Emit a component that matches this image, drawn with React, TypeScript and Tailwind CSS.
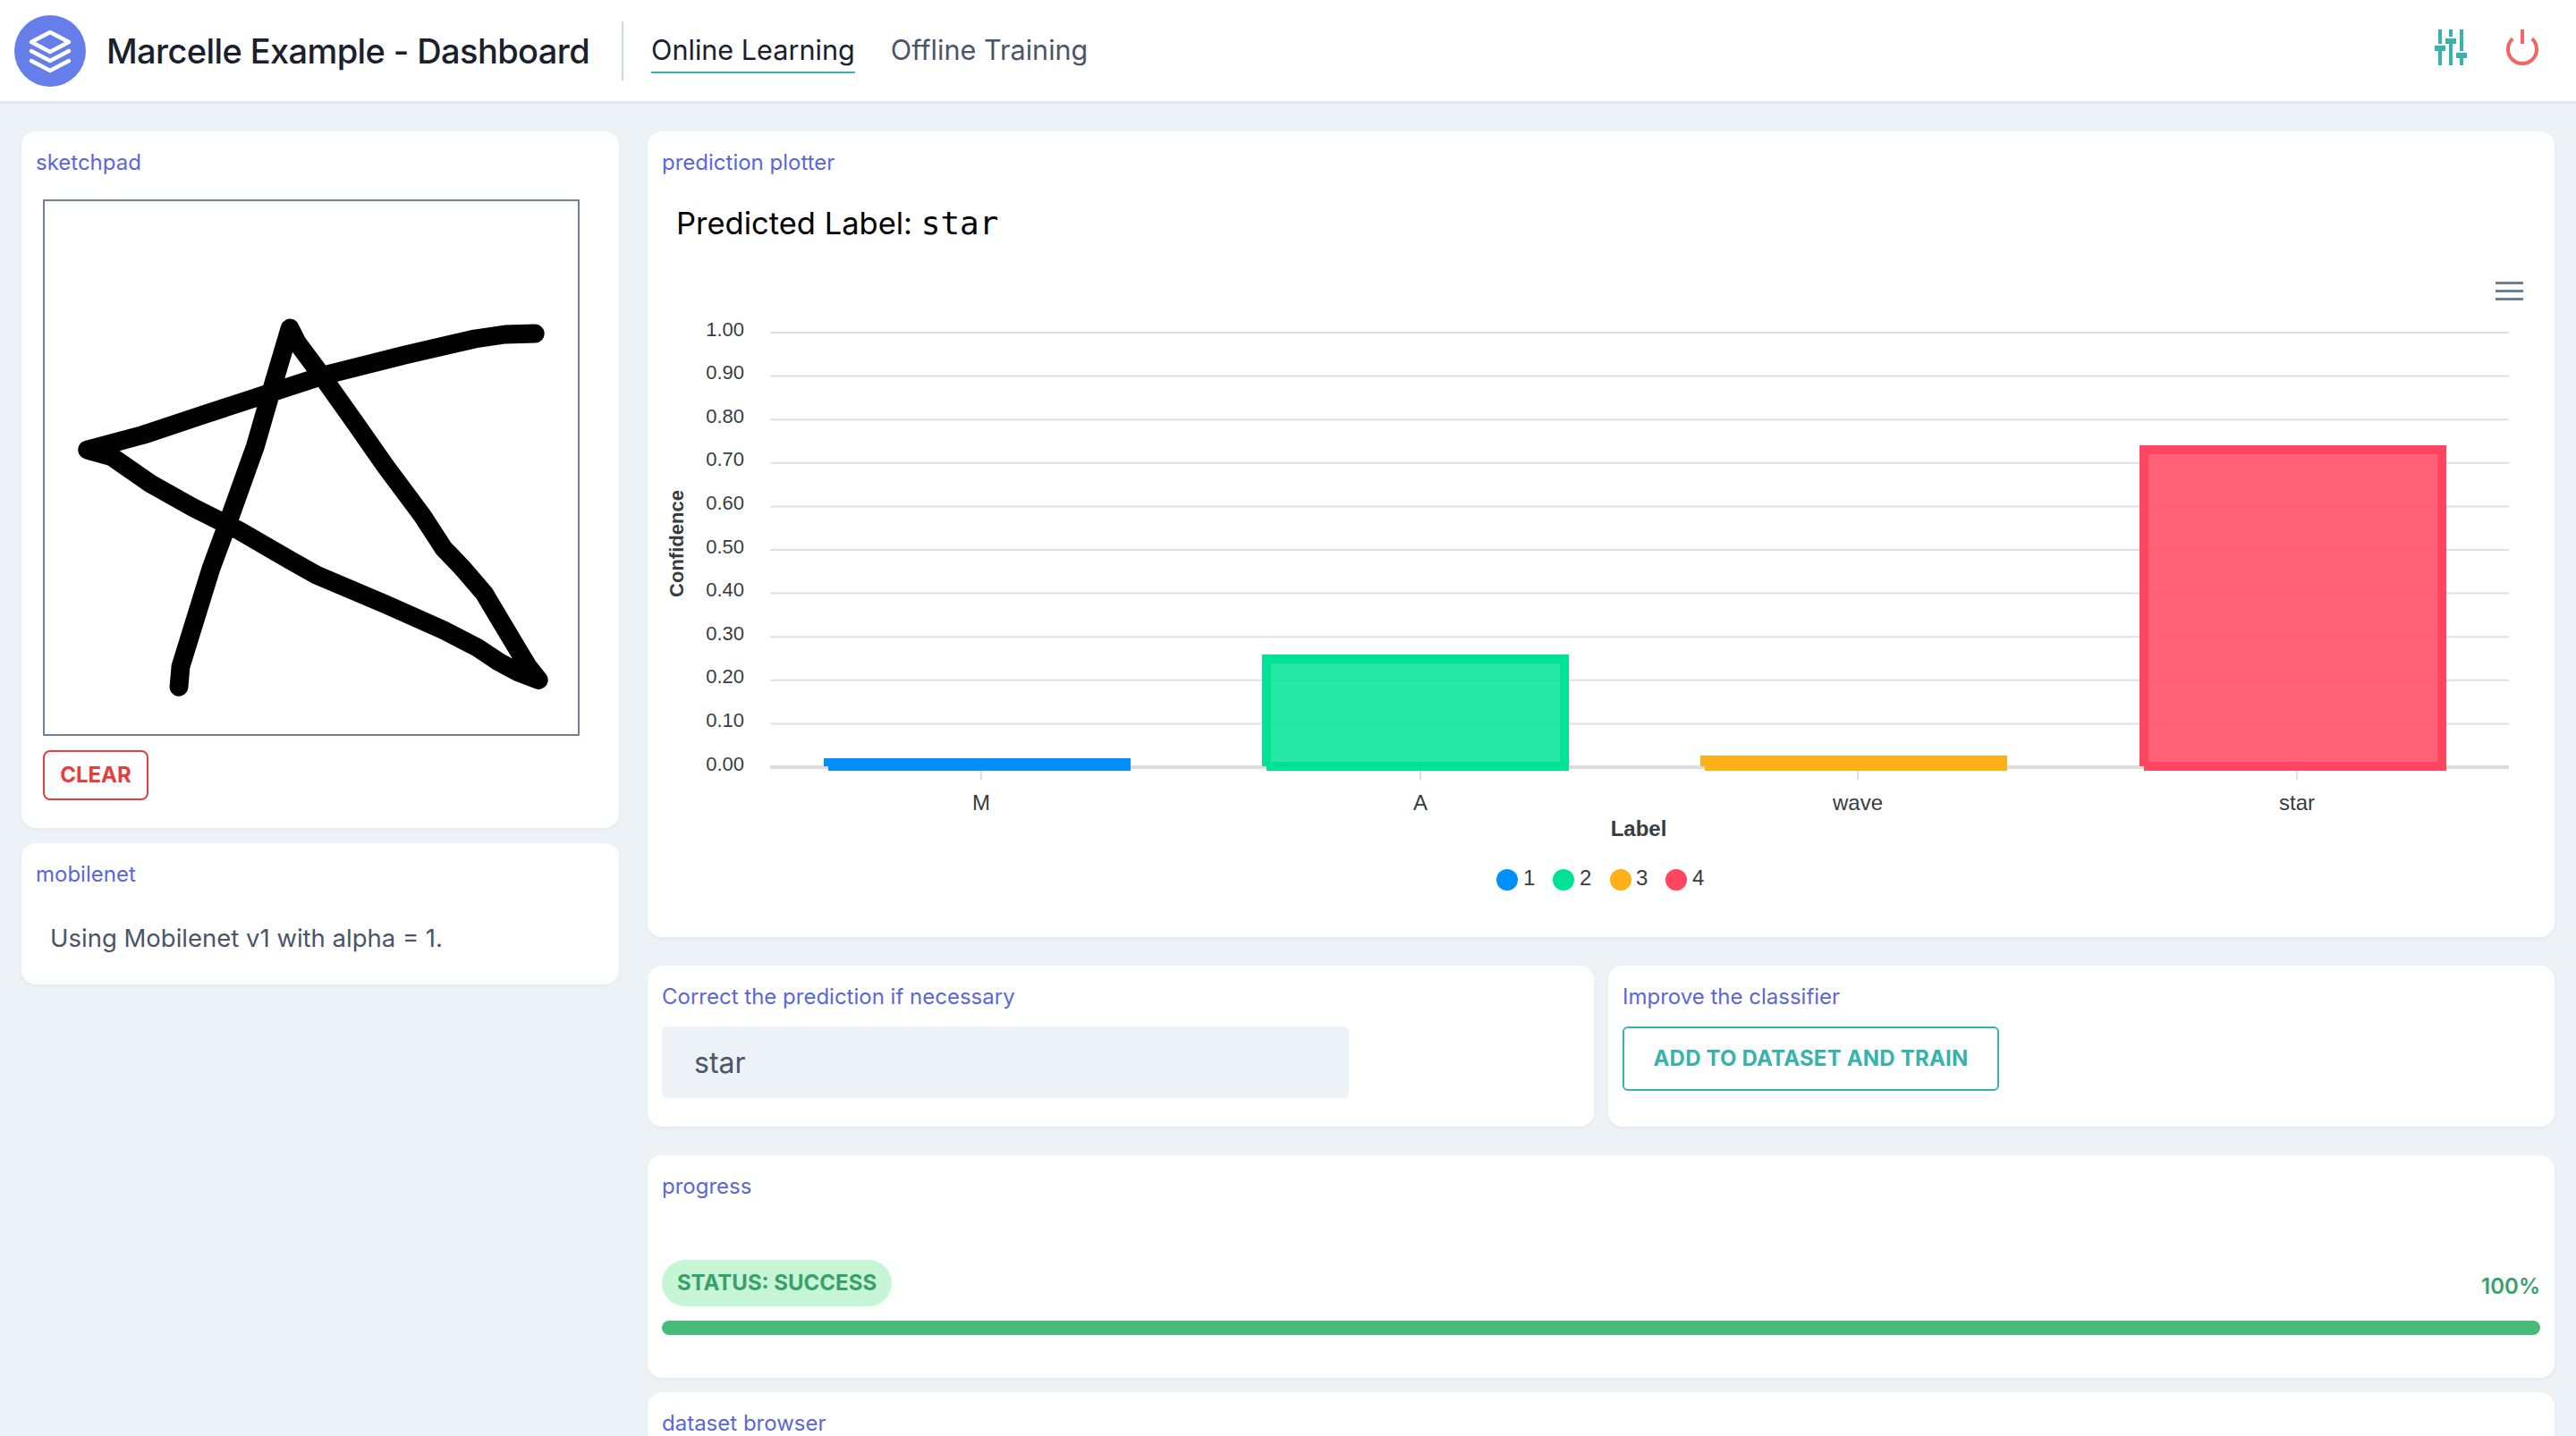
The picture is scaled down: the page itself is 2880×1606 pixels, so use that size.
const sansFont = "font-['Inter','Noto_Sans',sans-serif]";

const yTicks = ["1.00", "0.90", "0.80", "0.70", "0.60", "0.50", "0.40", "0.30", "0.20", "0.10", "0.00"];

const xTicks = [
  { label: "M", x: 1097 },
  { label: "A", x: 1588 },
  { label: "wave", x: 2077 },
  { label: "star", x: 2568 },
];

const bars = [
  { left: 921, right: 1264, top: 848, color: "#008ffb" },
  { left: 1411, right: 1754, top: 732, color: "#00e396" },
  { left: 1901, right: 2244, top: 845, color: "#feb019" },
  { left: 2392, right: 2735, top: 498, color: "#ff4560" },
];

const legend = [
  { label: "1", cx: 1685, tx: 1703, color: "#008ffb" },
  { label: "2", cx: 1748, tx: 1766, color: "#00e396" },
  { label: "3", cx: 1812, tx: 1829, color: "#feb019" },
  { label: "4", cx: 1874, tx: 1892, color: "#ff4560" },
];

const strokePoints =
  "151,547 153,524 187,414 208,357 237,276 254,217 276,143 284,159 310,194 349,249 384,299 425,354 449,391 471,414 495,442 514,474 544,524 556,539 532,530 510,518 486,502 449,483 384,454 306,421 276,404 219,371 167,345 119,318 76,288 48,280 111,263 180,240 250,217 315,196 406,173 484,155 518,150 552,149";

function Card({ title, className, children }: { title: string; className?: string; children?: React.ReactNode }) {
  return (
    <section className={`rounded-[16px] bg-white px-[16px] pt-[21px] shadow-[0_2px_4px_rgba(0,0,0,0.04)] ${className ?? ""}`}>
      <h2 className="text-[24px] leading-[28px] text-[#5a67d8]">{title}</h2>
      {children}
    </section>
  );
}

function Logo() {
  return (
    <div className="h-[80px] w-[80px] shrink-0 rounded-full bg-[#667eea]">
      <svg width="80" height="80" viewBox="0 0 80 80" fill="none" stroke="white" strokeWidth="4.5" strokeLinecap="round" strokeLinejoin="round">
        <path d="M40 19 61 30 40 41 19 30Z" />
        <path d="M19 40 40 51 61 40" />
        <path d="M19 51 40 62 61 51" />
      </svg>
    </div>
  );
}

function SlidersIcon() {
  return (
    <svg width="36" height="40" viewBox="0 0 36 40" fill="#38b2ac">
      <path d="M4 0h4v16H4zM0 18h12v6H0zM4 24h4v16H4z" />
      <path d="M16 0h4v8h-4zM12 10h12v6H12zM16 16h4v24h-4z" />
      <path d="M28 0h4v24h-4zM24 26h12v6H24zM28 32h4v8h-4z" />
    </svg>
  );
}

function PowerIcon() {
  return (
    <svg width="36" height="40" viewBox="0 0 36 40" fill="none" stroke="#f56565" strokeWidth="4">
      <path d="M18 0v16" />
      <path d="M7.2 10.3A16 16 0 1 0 28.8 10.3" />
    </svg>
  );
}

function Header() {
  return (
    <header className="flex h-[116px] items-center border-b-[3px] border-[#e2e8f0] bg-white pl-[16px] pr-[42px]">
      <Logo />
      <h1 className="ml-[23px] w-[576px] text-[38px] font-medium leading-none tracking-[-0.6px] text-[#1a202c]">Marcelle Example - Dashboard</h1>
      <div className="h-[66px] w-[2px] bg-[#cbd5e0]" />
      <nav className="ml-[31px] flex gap-[40px] text-[30.6px] leading-[48px]">
        <a className="border-b-[2px] border-[#38b2ac] text-[#1a202c]">Online Learning</a>
        <a className="text-[#4a5568]">Offline Training</a>
      </nav>
      <div className="mb-[7px] ml-auto flex items-center gap-[44px]">
        <SlidersIcon />
        <PowerIcon />
      </div>
    </header>
  );
}

function Sketchpad() {
  return (
    <Card title="sketchpad" className="h-[779px]">
      <div className="ml-[8px] mt-[27px] h-[600px] w-[600px] border-2 border-[#718096]">
        <svg className="block h-full w-full" viewBox="0 0 600 600" fill="none">
          <polyline points={strokePoints} stroke="black" strokeWidth="21" strokeLinecap="round" strokeLinejoin="round" />
        </svg>
      </div>
      <button className="ml-[8px] mt-[16px] h-[56px] w-[118px] rounded-[8px] border-2 border-[#e53e3e] text-[24px] font-bold text-[#e53e3e]">
        CLEAR
      </button>
    </Card>
  );
}

function PredictionChart() {
  return (
    <svg className="block" width="2132" height="781" viewBox="724 267 2132 781" fontFamily="'Liberation Sans', Arial, sans-serif">
      <g fill="#6e8192">
        <rect x="2790" y="315" width="31" height="3" />
        <rect x="2790" y="324" width="31" height="3" />
        <rect x="2790" y="333" width="31" height="3" />
      </g>
      {yTicks.map((tick, i) => {
        const y = 372 + i * 48.6;
        return (
          <g key={tick}>
            <line x1="861" x2="2805" y1={y} y2={y} stroke={i === 10 ? "#dcdcdc" : "#e0e0e0"} strokeWidth={i === 10 ? 4 : 2} />
            <text x="832" y={y + 3.5} textAnchor="end" fontSize="22" fill="#373d3f">
              {tick}
            </text>
          </g>
        );
      })}
      {bars.map((bar) => (
        <path
          key={bar.color}
          d={`M${bar.left + 5} 857V${bar.top + 5}H${bar.right - 5}V857H${bar.left + 5}`}
          fill={bar.color}
          fillOpacity="0.85"
          stroke={bar.color}
          strokeWidth="10"
          strokeLinejoin="miter"
        />
      ))}
      {xTicks.map((tick) => (
        <g key={tick.label}>
          <line x1={tick.x} x2={tick.x} y1="862" y2="872" stroke="#e0e0e0" strokeWidth="2" />
          <text x={tick.x} y="906" textAnchor="middle" fontSize="24" fill="#373d3f">
            {tick.label}
          </text>
        </g>
      ))}
      <text x="1832" y="935" textAnchor="middle" fontSize="24" fontWeight="700" fill="#373d3f">
        Label
      </text>
      <text transform="translate(764 608) rotate(-90)" textAnchor="middle" fontSize="22" fontWeight="700" fill="#373d3f">
        Confidence
      </text>
      {legend.map((item) => (
        <g key={item.label}>
          <circle cx={item.cx} cy="984" r="12" fill={item.color} />
          <text x={item.tx} y="990" fontSize="24" fill="#373d3f">
            {item.label}
          </text>
        </g>
      ))}
    </svg>
  );
}

export default function App() {
  return (
    <div className={`h-[1606px] overflow-hidden bg-[#edf2f7] ${sansFont}`}>
      <Header />
      <main className="flex gap-[32px] pl-[24px] pr-[24px] pt-[31px]">
        <div className="flex w-[668px] shrink-0 flex-col gap-[17px]">
          <Sketchpad />
          <Card title="mobilenet" className="h-[158px]">
            <p className="ml-[16px] mt-[36px] text-[27.5px] leading-[42px] text-[#4a5568]">Using Mobilenet v1 with alpha = 1.</p>
          </Card>
        </div>
        <div className="flex min-w-0 flex-1 flex-col">
          <section className="relative h-[901px] rounded-[16px] bg-white shadow-[0_2px_4px_rgba(0,0,0,0.04)]">
            <h2 className="px-[16px] pt-[21px] text-[24px] leading-[28px] text-[#5a67d8]">prediction plotter</h2>
            <p className="ml-[32px] mt-[30px] text-[34.5px] leading-[48px] text-black">
              Predicted Label: <span className="font-['DejaVu_Sans_Mono',monospace] text-[36px]">star</span>
            </p>
            <div className="absolute left-0 top-[120px]">
              <PredictionChart />
            </div>
          </section>
          <div className="mt-[32px] flex gap-[16px]">
            <Card title="Correct the prediction if necessary" className="h-[180px] w-[1058px]">
              <div className="mt-[19px] flex h-[80px] w-[768px] items-center rounded-[6px] bg-[#edf2f7] px-[36px] pt-[1px] text-[32px] text-[#4a5568]">star</div>
            </Card>
            <Card title="Improve the classifier" className="h-[180px] flex-1">
              <button className="mt-[19px] h-[72px] w-[421px] rounded-[6px] border-2 border-[#38b2ac] text-[24px] font-bold tracking-[0.2px] text-[#38b2ac]">
                ADD TO DATASET AND TRAIN
              </button>
            </Card>
          </div>
          <Card title="progress" className="mt-[32px] h-[249px]">
            <div className="mt-[68px] flex items-end justify-between">
              <span className="flex h-[52px] w-[257px] items-center justify-center rounded-full bg-[#c6f6d5] text-[24px] font-bold text-[#38a169]">
                STATUS: SUCCESS
              </span>
              <span className="mb-[4px] text-[24px] font-semibold leading-[36px] text-[#38a169]">100%</span>
            </div>
            <div className="mt-[16px] h-[16px] rounded-full bg-[#48bb78]" />
          </Card>
          <Card title="dataset browser" className="mt-[16px] h-[300px]" />
        </div>
      </main>
    </div>
  );
}
